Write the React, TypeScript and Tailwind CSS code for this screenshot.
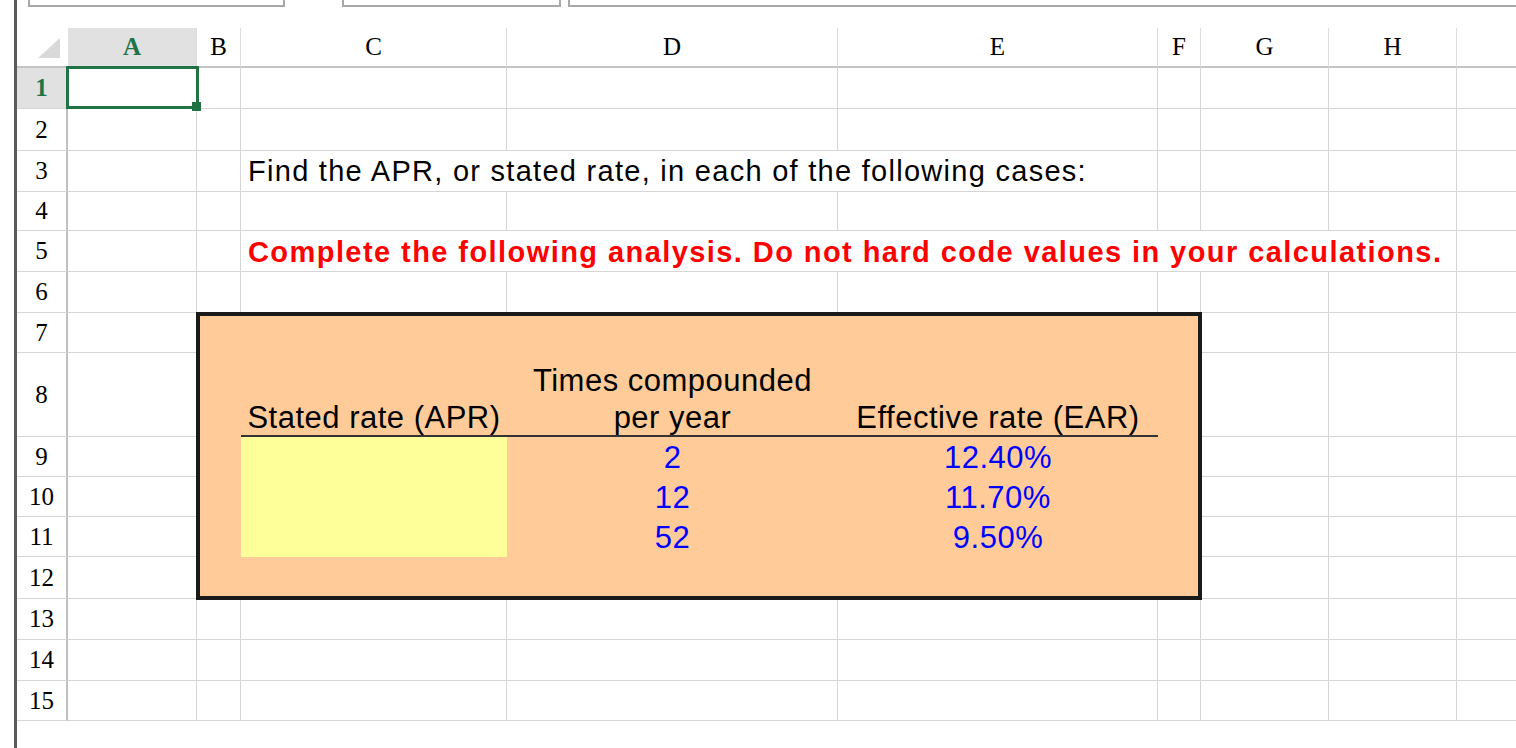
import type { ReactNode } from "react";

const COLUMNS = ["A", "B", "C", "D", "E", "F", "G", "H"];
const ROWS = Array.from({ length: 15 }, (_, i) => i + 1);

const serif = "font-['Liberation_Serif',serif] text-[25px]";
const gridLine = "border-r border-b border-[#d6d6d6]";

function ColHeader({ label }: { label: string }) {
  const selected = label === "A";
  return (
    <div
      className={`flex items-center justify-center border-r border-r-[#dcdcdc] border-b-2 border-b-[#c4c4c4] ${serif} ${
        selected ? "bg-[#e1e1e1] font-bold text-[#217346]" : "text-black"
      }`}
    >
      {label}
    </div>
  );
}

function RowHeader({ n }: { n: number }) {
  const selected = n === 1;
  return (
    <div
      className={`flex items-center justify-center border-r-2 border-r-[#c0c0c0] border-b border-b-[#d6d6d6] ${serif} ${
        selected ? "bg-[#e1e1e1] font-bold text-[#217346]" : "text-black"
      }`}
    >
      {n}
    </div>
  );
}

function Cell({ children, className = "" }: { children?: ReactNode; className?: string }) {
  return <div className={`${gridLine} ${className}`}>{children}</div>;
}

function renderRow(r: number) {
  const cells: ReactNode[] = [<RowHeader key={`rh${r}`} n={r} />];

  if (r === 1) {
    cells.push(
      <Cell key="a1" className="relative">
        <div className="absolute -left-[2px] -top-[2px] -right-[3px] -bottom-[1px] z-20 border-[3px] border-[#217346]">
          <div className="absolute -right-[5px] -bottom-[5px] h-[9px] w-[9px] bg-[#217346]" />
        </div>
      </Cell>
    );
    COLUMNS.slice(1).forEach((c) => cells.push(<Cell key={`${c}${r}`} />));
  } else if (r === 3) {
    cells.push(<Cell key="a3" />, <Cell key="b3" />);
    cells.push(
      <Cell key="c3" className="col-span-3 flex items-center whitespace-nowrap pt-[2px] pl-[7px] text-[29px] tracking-[1.28px] text-black">
        Find the APR, or stated rate, in each of the following cases:
      </Cell>
    );
    ["F", "G", "H"].forEach((c) => cells.push(<Cell key={`${c}${r}`} />));
  } else if (r === 5) {
    cells.push(<Cell key="a5" />, <Cell key="b5" />);
    cells.push(
      <Cell
        key="c5"
        className="col-span-6 flex items-center whitespace-nowrap pt-[4px] pl-[7px] text-[29px] font-bold tracking-[1.43px] text-[#ff0000]"
      >
        Complete the following analysis. Do not hard code values in your calculations.
      </Cell>
    );
  } else if (r >= 7 && r <= 12) {
    ["A", "G", "H"].forEach((c) => cells.push(<Cell key={`${c}${r}`} />));
  } else {
    COLUMNS.forEach((c) => cells.push(<Cell key={`${c}${r}`} />));
  }

  cells.push(<div key={`rest${r}`} className="border-b border-[#d6d6d6]" />);
  return cells;
}

const data = [
  { n: "2", ear: "12.40%" },
  { n: "12", ear: "11.70%" },
  { n: "52", ear: "9.50%" },
];

function RateBox() {
  return (
    <div className="relative z-10 col-start-3 col-end-8 row-start-8 row-end-14 grid grid-cols-[44px_266px_331px_320px_43px] grid-rows-[40px_84px_40px_40px_40px_42px] bg-[#ffcc99] text-[31px] tracking-[0.5px] shadow-[inset_0_0_0_3px_#1a1a1a,0_0_0_1px_#1a1a1a]">
      <div className="col-span-5" />

      <div />
      <div className="flex items-end justify-center border-b-2 border-[#333] pb-[1px] leading-[32px] text-black">
        Stated rate (APR)
      </div>
      <div className="flex flex-col items-center justify-end gap-[5px] border-b-2 border-[#333] pb-[1px] leading-[32px] text-black">
        <span>Times compounded</span>
        <span>per year</span>
      </div>
      <div className="flex items-end justify-center border-b-2 border-[#333] pb-[1px] leading-[32px] text-black">
        Effective rate (EAR)
      </div>
      <div />

      {data.map((d, i) => (
        <div key={d.n} className="contents">
          <div />
          {i === 0 && <div className="row-span-3 bg-[#ffff99]" />}
          <div className="flex items-center justify-center pt-[3px] text-[#0000ff]">{d.n}</div>
          <div className="flex items-center justify-center pt-[3px] text-[#0000ff]">{d.ear}</div>
          <div />
        </div>
      ))}

      <div className="col-span-5" />
    </div>
  );
}

export default function App() {
  return (
    <div className="flex h-[748px] w-[1516px] overflow-hidden bg-white font-['Liberation_Sans',Arial,sans-serif]">
      <div className="w-[14px] shrink-0" />
      <div className="w-[3px] shrink-0 bg-[#5a5a5a]" />
      <div className="flex min-w-0 flex-1 flex-col">
        <div className="flex h-[28px] items-start">
          <div className="ml-[11px] h-[7px] w-[257px] border-x-2 border-b-2 border-[#a8a8a8]" />
          <div className="ml-[57px] h-[7px] w-[219px] border-x-2 border-b-2 border-[#a8a8a8]" />
          <div className="ml-[7px] h-[7px] flex-1 border-l-2 border-b-2 border-[#a8a8a8]" />
        </div>

        <div className="grid grid-cols-[51px_129px_44px_266px_331px_320px_43px_128px_128px_59px] grid-rows-[40px_41px_42px_41px_39px_41px_41px_40px_84px_40px_40px_40px_42px_41px_41px_40px]">
          <div className="flex items-end justify-end border-b-2 border-[#c4c4c4] pr-[8px] pb-[8px]">
            <svg width="22" height="20" viewBox="0 0 22 20">
              <polygon points="22,0 22,20 0,20" fill="#d9d9d9" />
            </svg>
          </div>
          {COLUMNS.map((c) => (
            <ColHeader key={c} label={c} />
          ))}
          <div className="border-b-2 border-[#c4c4c4]" />

          {ROWS.map((r) => renderRow(r))}

          <RateBox />
        </div>
      </div>
    </div>
  );
}
